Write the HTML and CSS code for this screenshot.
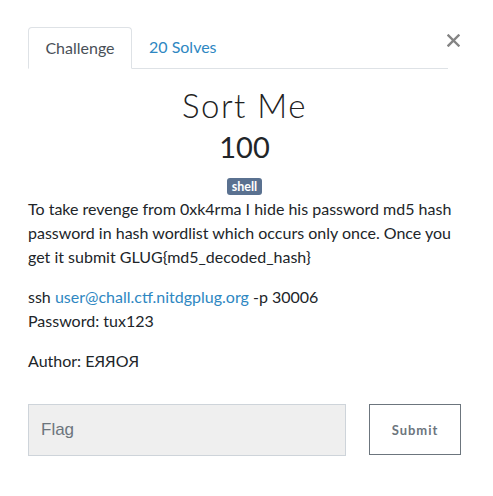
FILE: index.html
```html
<!DOCTYPE html>
<html>
<head>
<meta charset="utf-8">
<link rel="stylesheet" href="styles.css">
</head>
<body>
<div class="modal">
  <button class="close" aria-label="Close">
    <svg width="13" height="13" viewBox="0 0 13 13"><path d="M1.5 1.5 L11.5 11.5 M11.5 1.5 L1.5 11.5" stroke="#848484" stroke-width="2.4" stroke-linecap="square"/></svg>
  </button>
  <ul class="tabs">
    <li class="tab active">Challenge</li>
    <li class="tab link">20 Solves</li>
  </ul>
  <h2 class="title">Sort Me</h2>
  <h3 class="value">100</h3>
  <div class="tags"><span class="badge">shell</span></div>
  <div class="desc">
    <p>To take revenge from 0xk4rma I hide his password md5 hash password in hash wordlist which occurs only once. Once you get it submit GLUG{md5_decoded_hash}</p>
    <p>ssh <a href="#">user@chall.ctf.nitdgplug.org</a> -p 30006<br>Password: tux123</p>
    <p>Author: EЯЯOЯ</p>
  </div>
  <div class="submit-row">
    <input class="flag" type="text" placeholder="Flag">
    <button class="submit">Submit</button>
  </div>
</div>
</body>
</html>
```

FILE: styles.css
```css
html, body {
  margin: 0;
  padding: 0;
  background: #fff;
}
body {
  font-family: Lato, "Open Sans", sans-serif;
  color: #212529;
  font-size: 16px;
  line-height: 24px;
}
.modal {
  position: relative;
  width: 433px;
  padding: 27px 0 0 28px;
}
.close {
  position: absolute;
  left: 447px;
  top: 34px;
  border: 0;
  background: none;
  padding: 0;
  width: 13px;
  height: 13px;
  cursor: pointer;
}
.close svg { display: block; }
.tabs {
  list-style: none;
  margin: 0;
  padding: 0;
  display: flex;
  width: 420px;
  border-bottom: 1px solid #dee2e6;
  height: 41px;
}
.tab {
  height: 41px;
  box-sizing: border-box;
  padding: 0 16px;
  line-height: 40px;
  font-size: 16px;
}
.tab.active {
  width: 104px;
  border: 1px solid #dee2e6;
  border-bottom-color: #fff;
  border-radius: 4px 4px 0 0;
  color: #495057;
  background: #fff;
  height: 42px;
  text-align: center;
}
.tab.link {
  color: #2e87c2;
  padding-left: 17px;
}
.title {
  margin: 16px 0 0;
  text-align: center;
  font-weight: 300;
  font-size: 33px;
  line-height: 40px;
  letter-spacing: 1.5px;
  color: #222;
}
.value {
  margin: 4px 0 0;
  text-align: center;
  font-weight: 400;
  font-size: 29px;
  line-height: 36px;
}
.tags {
  text-align: center;
  margin-top: 12px;
  height: 20px;
}
.badge {
  display: inline-block;
  background: #5a7190;
  color: #fff;
  font-weight: 700;
  font-size: 12.5px;
  line-height: 17px;
  padding: 0 5px;
  border-radius: 3px;
  vertical-align: top;
  margin-top: 1px;
}
.desc p {
  margin: 0 0 16px;
}
.desc a {
  color: #2e87c2;
  text-decoration: none;
}
.submit-row {
  display: flex;
  justify-content: space-between;
  margin-top: 31px;
}
.flag {
  width: 318px;
  height: 52px;
  box-sizing: border-box;
  border: 1px solid #ced4da;
  background: #efefef;
  padding: 0 12px;
  font-family: "Liberation Sans", Arial, sans-serif;
  font-size: 17px;
  color: #495057;
  margin: 0;
}
.flag::placeholder { color: #6c757d; }
.submit {
  width: 92px;
  height: 51px;
  box-sizing: border-box;
  border: 1px solid #6c757d;
  background: #fff;
  color: #6c757d;
  font-family: Lato, sans-serif;
  font-weight: 700;
  font-size: 13px;
  letter-spacing: 1px;
  margin: 0;
  padding: 0;
}
```
